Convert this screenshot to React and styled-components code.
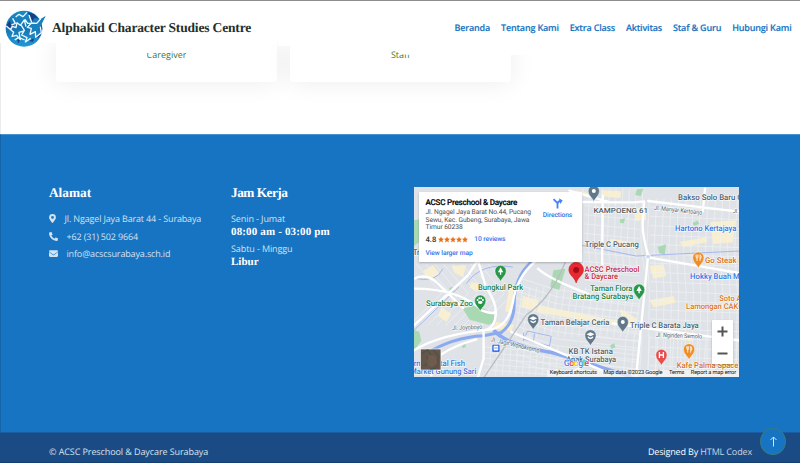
import React from "react";
import styled, { createGlobalStyle } from "styled-components";

const GlobalStyle = createGlobalStyle`
  *, *::before, *::after { box-sizing: border-box; }
  body {
    margin: 0;
    background: #fff;
    font-family: "Open Sans", "Noto Sans", sans-serif;
    text-rendering: geometricPrecision;
    overflow: hidden;
  }
`;

const serif = `"Liberation Serif", "Times New Roman", serif`;

const Page = styled.div`
  position: relative;
  width: 800px;
  height: 463px;
  display: flex;
  flex-direction: column;
  overflow: hidden;
  background: #fff;
`;

const Header = styled.header`
  height: 43px;
  flex: none;
  display: flex;
  align-items: center;
  justify-content: space-between;
  padding: 12px 8.5px 0 5px;
  background: #fff;
  border-top: 1px solid #8e8e8e;
  position: relative;
  z-index: 2;
`;

const Brand = styled.div`
  display: flex;
  align-items: center;
  gap: 6px;
`;

const Logo = styled.svg`
  width: 41px;
  height: 39px;
  flex: none;
`;

const BrandName = styled.h1`
  margin: 0;
  font: 700 13.5px/16px ${serif};
  letter-spacing: -0.17px;
  color: #24302a;
  white-space: nowrap;
`;

const Nav = styled.nav`
  display: flex;
  gap: 10.9px;
`;

const NavLink = styled.a`
  font-size: 9px;
  line-height: 14px;
  font-weight: 600;
  letter-spacing: -0.17px;
  -webkit-text-stroke: 0.15px #1774c2;
  color: #1774c2;
  white-space: nowrap;
`;

const Team = styled.section`
  height: 91px;
  flex: none;
  display: flex;
  gap: 13px;
  padding-left: 55px;
  border-left: 1px solid #ececec;
  overflow: hidden;
`;

const RoleCard = styled.div`
  width: 221px;
  height: 39px;
  flex: none;
  background: #fff;
  border-radius: 0 0 3px 3px;
  box-shadow: 0 0 26px rgba(0, 0, 0, 0.08);
  padding-top: 5px;
  text-align: center;
  line-height: 14px;
`;

const Role = styled.span`
  display: block;
  width: fit-content;
  margin: 0 auto;
  font-size: 9px;
  line-height: 14px;
  color: #3d7a37;
  clip-path: ${(p) => p.$clip};
`;

const HeaderShade = styled.div`
  position: absolute;
  z-index: 1;
  left: 278px;
  top: 43px;
  width: 522px;
  height: 12px;
  background: #fff;
  clip-path: polygon(0 0, 100% 0, 100% 100%, 232px 100%, 232px 3px, 0 3px);
`;

const Footer = styled.footer`
  height: 298px;
  flex: none;
  display: grid;
  grid-template-columns: 182px 183px 325px;
  padding: 52px 0 0 48px;
  background: #1774c2;
  color: #d3e1ef;
  border-top: 1px solid #4a94d2;
  border-left: 1px solid #1565ab;
`;

const Column = styled.div`
  display: flex;
  flex-direction: column;
`;

const Heading = styled.h2`
  margin: -2px 0 9px;
  font: 700 13.3px/16px ${serif};
  letter-spacing: ${(p) => p.$track || 0}px;
  color: #fff;
`;

const ContactRow = styled.div`
  display: flex;
  align-items: center;
  height: 17.5px;
  font-size: 9px;
  letter-spacing: -0.15px;
  gap: ${(p) => p.$gap || 8.5}px;
  white-space: nowrap;
  svg { width: ${(p) => p.$icon || 9}px; height: 9px; fill: #d6e2ee; flex: none; }
`;

const Days = styled.div`
  font-size: 9px;
  letter-spacing: -0.1px;
  line-height: 14px;
  margin-top: 2px;
`;

const Hours = styled.div`
  font: 700 11px/14px ${serif};
  color: #fff;
  letter-spacing: ${(p) => p.$track || 0}px;
  margin-top: -1px;
  margin-bottom: 1px;
  white-space: nowrap;
`;

const MapFrame = styled.div`
  position: relative;
  width: 325px;
  height: 190px;
  overflow: hidden;
  font-family: Roboto, sans-serif;
`;

const MapDrawing = styled.svg`
  display: block;
  width: 325px;
  height: 190px;
`;

const PlaceCard = styled.div`
  position: absolute;
  left: 5px;
  top: 5px;
  width: 163px;
  height: 70px;
  background: #fff;
  box-shadow: 0 1px 2px rgba(0, 0, 0, 0.25);
  display: flex;
  justify-content: space-between;
  padding: 5px 10px 0 6.5px;
`;

const PlaceInfo = styled.div`
  width: 114px;
  white-space: nowrap;
`;

const PlaceName = styled.div`
  font: 500 8.1px/10px Roboto, sans-serif;
  letter-spacing: -0.25px;
  -webkit-text-stroke: 0.15px #000;
  color: #000;
`;

const Address = styled.div`
  margin-top: 2px;
  font-size: 6.7px;
  letter-spacing: -0.07px;
  line-height: 7.7px;
  color: #4d4d4d;
`;

const Rating = styled.div`
  display: flex;
  align-items: center;
  margin-top: 3px;
  height: 9px;
  font-size: 7.6px;
  font-weight: 500;
  color: #333;
  svg { width: 30px; height: 7px; margin: 0 6px 0 2px; fill: #e7711b; }
`;

const Link = styled.a`
  font-size: 6.7px;
  font-weight: 500;
  letter-spacing: -0.09px;
  line-height: 9px;
  color: #3271e8;
`;

const LargerMap = styled(Link)`
  display: block;
  margin-top: 5px;
`;

const Directions = styled.div`
  display: flex;
  flex-direction: column;
  align-items: center;
  padding-top: 1px;
  width: 29px;
  svg { width: 11px; height: 11px; }
`;

const DirectionLink = styled(Link)`
  margin-top: 2px;
`;

const Zoom = styled.div`
  position: absolute;
  right: 6px;
  bottom: 13px;
  width: 21px;
  height: 44px;
  background: #fff;
  box-shadow: 0 1px 2px rgba(0, 0, 0, 0.25);
  display: grid;
  grid-template-rows: 1fr 1fr;
  place-items: center;
  svg { width: 11px; height: 11px; stroke: #555; stroke-width: 2; }
`;

const Attribution = styled.div`
  position: absolute;
  right: 0;
  bottom: 0;
  display: flex;
  gap: 6.5px;
  height: 7px;
  padding: 0 3px;
  font-size: 5.7px;
  letter-spacing: -0.13px;
  line-height: 7px;
  color: #111;
  background: rgba(245, 245, 245, 0.75);
  white-space: nowrap;
`;

const Copyright = styled.div`
  flex: 1;
  display: flex;
  align-items: center;
  justify-content: space-between;
  padding: 7px 48px 0 49px;
  background: #1b4b85;
  color: #d9e1ea;
  font-size: 9px;
  font-weight: 500;
  letter-spacing: -0.09px;
  border-top: 1px solid #1a5c9f;
  border-bottom: 1px solid #153f70;
`;

const Credit = styled.span`
  color: #fff;
  letter-spacing: -0.14px;
  a { color: #ccd6e1; }
`;

const BackToTop = styled.button`
  position: absolute;
  left: 760px;
  top: 428px;
  width: 26px;
  height: 27px;
  border-radius: 50%;
  border: 1px solid #357b83;
  background: #1774c2;
  display: grid;
  place-items: center;
  padding: 0;
  svg { width: 9px; height: 11px; stroke: #d4e5f3; fill: none; }
`;

const navItems = ["Beranda", "Tentang Kami", "Extra Class", "Aktivitas", "Staf & Guru", "Hubungi Kami"];

function BrandLogo() {
  return (
    <Logo viewBox="0 0 123 117">
      <defs>
        <linearGradient id="globe" x1="0" y1="0" x2="0" y2="1">
          <stop offset="0" stopColor="#168bc4" />
          <stop offset=".5" stopColor="#1676b4" />
          <stop offset="1" stopColor="#2099d3" />
        </linearGradient>
      </defs>
      <ellipse cx="57" cy="59" rx="55" ry="54" fill="url(#globe)" />
      <path d="M68 9l20 7 13 14-12-4-8 12zM104 40l8 18-5 20-9 10 3-28zM5 48l10-14 4 17-6 9zM37 91l8 2-6 11zM72 96l15-8-3 10z" fill="#1c3c8a" />
      <path d="M122 21l-15 9-12 13-16-1-12 13 12 3-4 18 16-8 1 17 17-14-3-18 10-20z" fill="#1781bd" />
      <g fill="none" stroke="#eef9ff" strokeWidth="4" strokeLinejoin="round">
        <path d="M107 30l-12 13-16-1-12 13 12 3-4 18 16-8 1 17 17-14-3-18" />
        <path d="M4 51l13 11 5-10 11 4 3-15 10 8 12-16 5 20M17 62l9 8-5 12 14-3 11 13-4-22 15-4M32 24l10-8 12 7 12-13M49 49l9 15-8 14 16 8-5 13 16-11M29 93l12-8 18 8M60 31l8 12 12 0M23 28l8 15-12 5M72 18l8 22" />
      </g>
      <path d="M122 21l-13 9-8 13 8-6 6-9z" fill="#1781bd" />
    </Logo>
  );
}

const stars = [0, 1, 2, 3, 4].map((i) => (
  <path key={i} transform={`translate(${i * 12},0)`} d="M6 0l1.8 4.2 4.2.3-3.2 3 1 4.5L6 9.5 2.2 12l1-4.5L0 4.5l4.2-.3z" />
));

function Pin({ x, y, color, children }) {
  return (
    <g transform={`translate(${x} ${y})`}>
      <path d="M0 32C-3 21-17 15-17 0A17 17 0 0 1 17 0C17 15 3 21 0 32Z" fill={color} stroke="#fff" strokeWidth="1.5" />
      {children}
    </g>
  );
}

const Label = styled.text`
  font-family: Roboto, sans-serif;
  font-size: ${(p) => p.$size || 24}px;
  font-weight: ${(p) => (p.$street ? 400 : 500)};
  fill: ${(p) => p.$color || "#4b626d"};
  stroke: #fff;
  stroke-width: 4px;
  stroke-opacity: 0.85;
  stroke-linejoin: round;
  paint-order: stroke;
`;

const green = "#218145";
const blue = "#3474e0";
const orange = "#d9731a";

const labels = [
  { t: "KAMPOENG 61", x: 542, y: 83, w: 164, c: "#555d63", s: 21 },
  { t: "Bakso Solo Baru G", x: 796, y: 45, w: 194 },
  { t: "Hartono Kertajaya", x: 787, y: 137, w: 184, c: blue },
  { t: "Triple C Pucang", x: 516, y: 184, w: 162 },
  { t: "Go Steak N", x: 877, y: 234, w: 117, c: orange },
  { t: "Hokky Buah Ma", x: 832, y: 281, w: 162, c: blue },
  { t: "ACSC Preschool", x: 515, y: 259, w: 165, c: "#c5293d" },
  { t: "& Daycare", x: 515, y: 281, w: 101, c: "#c5293d" },
  { t: "Taman Flora", x: 532, y: 318, w: 127, c: green },
  { t: "Bratang Surabaya", x: 479, y: 342, w: 182, c: green },
  { t: "Bungkul Park", x: 195, y: 313, w: 136, c: green },
  { t: "Surabaya Zoo", x: 39, y: 362, w: 141, c: green },
  { t: "Soto A", x: 920, y: 346, w: 66, c: orange },
  { t: "Lamongan CAK I", x: 820, y: 370, w: 169, c: orange },
  { t: "Taman Belajar Ceria", x: 383, y: 419, w: 207 },
  { t: "Triple C Barata Jaya", x: 652, y: 427, w: 206 },
  { t: "KB TK Istana", x: 467, y: 505, w: 133 },
  { t: "Anak Surabaya", x: 460, y: 529, w: 150 },
  { t: "Kafe Palma Space", x: 792, y: 547, w: 185, c: orange },
  { t: "Ornamental Fish", x: -14, y: 543, w: 170, c: blue },
  { t: "Market Gunung Sari", x: -8, y: 567, w: 198, c: blue },
  { t: "Tr", x: 0, y: 210, w: 20 },
];

const range = (a, b, step) => Array.from({ length: Math.ceil((b - a) / step) }, (_, i) => a + i * step);

function CityMap() {
  return (
    <MapDrawing viewBox="3 5 976 570" preserveAspectRatio="none">
      <rect x="0" y="0" width="985" height="580" fill="#dfe2e7" />
      <g fill="#f8efd0">
        <path d="M30 258l30-18 20 25-30 20zM115 242l45-2-10 35-26-13zM175 290l22 5-2 24-25-12zM290 300l24 5-15 78-22-5zM330 332l48 11-10 34-43-12zM375 360l260 50-3 15-260-44zM85 365l30 20-14 24-26-17zM710 242l42-5 9 35-39 8zM665 70l30-5 6 38-34 4zM592 160l82 12-3 14-80-10zM800 170l80-14 4 14-70 15zM893 110l76-5-8 66-60 5zM710 345l72-13 6 20-65 14zM623 370l50 30-4 28-42-12zM732 440l110 15-3 13-108-13zM490 15l55 12-2 11-56-12zM250 410l53 8-8 20-55-10zM565 15l60 3-2 20-58-5z" />
      </g>
      <g fill="none" stroke="#eff1f3" strokeWidth="2.2">
        {range(510, 710, 20).map((x) => <path key={`a${x}`} d={`M${x} 10l-6 160 10 85`} />)}
        {range(710, 980, 22).map((x) => <path key={`b${x}`} d={`M${x} 40l-8 150 8 130-4 240`} />)}
        {range(60, 570, 28).map((y) => <path key={`c${y}`} d={`M515 ${y}l165 16M712 ${y + 5}l270 10`} />)}
        {range(275, 540, 21).map((y) => <path key={`d${y}`} d={`M310 ${y}l120 38 250 29`} />)}
        {range(330, 690, 21).map((x) => <path key={`e${x}`} d={`M${x} 305l-22 150`} />)}
        {range(10, 240, 27).map((x) => <path key={`f${x}`} d={`M${x} 235l75 90-95 95`} />)}
        {range(235, 450, 20).map((x) => <path key={`g${x}`} d={`M${x} 480l-7 90`} />)}
        {range(485, 570, 17).map((y) => <path key={`h${y}`} d={`M215 ${y}l235 18`} />)}
        {range(640, 980, 24).map((x) => <path key={`i${x}`} d={`M${x} 450l-8 120`} />)}
      </g>
      <g fill="#a9d9b2">
        <path d="M150 370l39-12 54 28 2 25-18 7-57-15zM3 105l16-3v68l-16 12zM422 255l36-5-19 64-27-8zM3 434l16 5 6 28-22 28zM672 12l20-2-8 22-17-3zM735 185l25-8-4 31-16-4zM148 475l10-3v14l-10 2zM109 308l10-4 3 13-11 3zM622 102l15-3-4 15-11-1zM840 112l15-6 5 10-17 5zM592 480l12-6 4 12-12 5z" />
      </g>
      <g fill="none" stroke="#a5b7ef" strokeWidth="3">
        <path d="M0 278Q70 295 90 250M160 295Q205 230 300 245M3 435L138 305M508 180l162 32 310-15M345 437l70 16-5 29-79-21zM332 442v25M365 445l-4 28" />
      </g>
      <g fill="none" strokeLinecap="round" strokeLinejoin="round">
        <path d="M35 507Q120 455 211 451Q245 444 264 442Q305 413 304 352Q305 275 354 231" stroke="#8baaf0" strokeWidth="9" />
        <path d="M245 437Q282 480 420 502Q530 533 570 548L650 572" stroke="#8baaf0" strokeWidth="11" />
        <g stroke="#fff" strokeWidth="7">
          <path d="M3 420L165 270 190 232M196 230Q213 285 220 308Q249 348 249 381Q247 431 212 435L212 520 195 575M3 310Q140 310 208 376Q244 389 247 378M3 495Q83 445 238 432 286 421 300 351Q310 278 365 230M375 250Q410 282 525 325M510 50l155 1L694 48 691 100Q685 137 706 210L670 575M706 216L980 263M570 32l-2 205M706 47l170 20 105 12M600 414Q720 432 980 465M3 280Q38 263 70 290L150 368M295 440l280 118M55 570Q40 505 190 462M470 16l115 33M877 10l-7 70M450 575l95-52" />
        </g>
        <path d="M465 210Q421 335 340 389L214 575" stroke="#b9bec3" strokeWidth="4" />
      </g>
      <circle cx="706" cy="214" r="7" fill="#c7d5f5" stroke="#fff" strokeWidth="3" />

      <Label $street $size={19} transform="translate(724 73) rotate(6)" textLength="145" lengthAdjust="spacingAndGlyphs">Jl. Manyar Kertoarjo</Label>
      <Label $street $size={19} transform="translate(730 455) rotate(2)" textLength="138" lengthAdjust="spacingAndGlyphs">Jl. Nginden Semolo</Label>
      <Label $street $size={19} transform="translate(118 434) rotate(-2)" textLength="90" lengthAdjust="spacingAndGlyphs">Jl. Joyoboyo</Label>
      <Label $street $size={19} transform="translate(232 468) rotate(13)" textLength="150" lengthAdjust="spacingAndGlyphs">Jl. Jagir Wonokromo</Label>
      <Label $street $size={17} x="960" y="83">Jl.</Label>
      {labels.map((l) => (
        <Label key={l.t} x={l.x} y={l.y} $color={l.c} $size={l.s} textLength={l.w} lengthAdjust="spacingAndGlyphs">{l.t}</Label>
      ))}

      <Pin x="543" y="17" color="#60788a"><circle r="6" fill="#fff" /></Pin>
      <Pin x="263" y="257" color="#28974a"><path d="M0-11l8 15h-6v7h-4V4h-6z" fill="#fff" /></Pin>
      <Pin x="202" y="346" color="#28974a">
        <g fill="#fff"><ellipse cy="5" rx="7" ry="5" /><circle cx="-8" cy="-2" r="3" /><circle cx="-3" cy="-7" r="3" /><circle cx="3" cy="-7" r="3" /><circle cx="8" cy="-2" r="3" /></g>
      </Pin>
      <Pin x="679" y="313" color="#28974a"><path d="M0-11l8 15h-6v7h-4V4h-6z" fill="#fff" /></Pin>
      <Pin x="361" y="402" color="#60788a"><path d="M-12-3L0-9 12-3 0 3zM-8 3l8 4 8-4v5l-8 4-8-4z" fill="#fff" /></Pin>
      <Pin x="533" y="450" color="#60788a"><path d="M-12-3L0-9 12-3 0 3zM-8 3l8 4 8-4v5l-8 4-8-4z" fill="#fff" /></Pin>
      <Pin x="630" y="410" color="#60788a"><circle r="6" fill="#fff" /></Pin>
      {[{ x: 857, y: 217 }, { x: 829, y: 492 }].map((p) => (
        <Pin key={p.x} x={p.x} y={p.y} color="#f08d24"><path d="M-7-9v6q0 4 3 4v9M-4-9v9M-1-9v6q0 4-3 4M5 10V-9q5 4 3 11H5" fill="none" stroke="#fff" strokeWidth="2.5" /></Pin>
      ))}
      <Pin x="746" y="509" color="#e94c4b"><path d="M-6-9V9M6-9V9M-6 0H6" fill="none" stroke="#fff" strokeWidth="4" /></Pin>
      <path d="M490 293C485 274 468 270 468 253A22 22 0 0 1 512 253C512 270 495 274 490 293Z" fill="#e92931" stroke="#c61b25" strokeWidth="1.5" />
      <circle cx="490" cy="254" r="9" fill="#a20d19" />

      <rect x="238" y="478" width="22" height="22" rx="3" fill="#326cea" />
      <path d="M243 482h12v12h-12zM244 498l3-4m7 4l-3-4" fill="#fff" stroke="#fff" strokeWidth="1.5" />
      <path d="M244 488h10" stroke="#326cea" strokeWidth="2" />

      <rect x="22" y="491" width="62" height="63" fill="#66554b" stroke="#fff" strokeWidth="2" />
      <path d="M26 505l18-11 8 13-10 10 8 15-18 9M61 494l16 19-5 35-20 3" fill="none" stroke="#4d5547" strokeWidth="4" />
      <path d="M46 508l22 5 5 19-17 14-14-9z" fill="#755e50" opacity=".7" />
      <text x="453" y="541" fontFamily="Roboto, sans-serif" fontSize="27" fontWeight="500" textLength="76" stroke="#fff" strokeWidth="3" paintOrder="stroke">
        <tspan fill="#4285f4">G</tspan><tspan fill="#ea4335">o</tspan><tspan fill="#fbbc05">o</tspan><tspan fill="#4285f4">g</tspan><tspan fill="#34a853">l</tspan><tspan fill="#ea4335">e</tspan>
      </text>
    </MapDrawing>
  );
}

export default function App() {
  return (
    <Page>
      <GlobalStyle />
      <Header>
        <Brand>
          <BrandLogo />
          <BrandName>Alphakid Character Studies Centre</BrandName>
        </Brand>
        <Nav>{navItems.map((item) => <NavLink key={item}>{item}</NavLink>)}</Nav>
      </Header>
      <HeaderShade />
      <Team>
        <RoleCard><Role $clip="polygon(0 5px, 13% 5px, 13% 0, 100% 0, 100% 100%, 0 100%)">Caregiver</Role></RoleCard>
        <RoleCard><Role $clip="polygon(0 0, 47% 0, 47% 6px, 100% 7px, 100% 100%, 0 100%)">Staff</Role></RoleCard>
      </Team>
      <Footer>
        <Column>
          <Heading>Alamat</Heading>
          <ContactRow $icon={7}>
            <svg viewBox="0 0 384 512"><path fillRule="evenodd" d="M172 501C27 291 0 270 0 192a192 192 0 0 1 384 0c0 78-27 99-172 309a24 24 0 0 1-40 0zM192 272a80 80 0 1 0 0-160 80 80 0 0 0 0 160z" /></svg>
            Jl. Ngagel Jaya Barat 44 - Surabaya
          </ContactRow>
          <ContactRow>
            <svg viewBox="0 0 512 512"><path d="M498 361l-112-48a24 24 0 0 0-28 7l-50 61A371 371 0 0 1 131 204l61-50a24 24 0 0 0 7-28L151 14A24 24 0 0 0 123 1L19 25A24 24 0 0 0 0 48c0 257 208 464 464 464a24 24 0 0 0 23-19l24-104a24 24 0 0 0-13-28z" /></svg>
            +62 (31) 502 9664
          </ContactRow>
          <ContactRow>
            <svg viewBox="0 0 512 512"><path d="M48 64a48 48 0 0 0-29 86l218 164a32 32 0 0 0 38 0l218-164a48 48 0 0 0-29-86zM0 176v208a64 64 0 0 0 64 64h384a64 64 0 0 0 64-64V176L294 339a64 64 0 0 1-76 0z" /></svg>
            info@acscsurabaya.sch.id
          </ContactRow>
        </Column>
        <Column>
          <Heading $track={-0.5}>Jam Kerja</Heading>
          <Days>Senin - Jumat</Days>
          <Hours $track={0.15}>08:00 am - 03:00 pm</Hours>
          <Days>Sabtu - Minggu</Days>
          <Hours>Libur</Hours>
        </Column>
        <MapFrame>
          <CityMap />
          <PlaceCard>
            <PlaceInfo>
              <PlaceName>ACSC Preschool &amp; Daycare</PlaceName>
              <Address>Jl. Ngagel Jaya Barat No.44, Pucang<br />Sewu, Kec. Gubeng, Surabaya, Jawa<br />Timur 60238</Address>
              <Rating>4.8<svg viewBox="0 0 60 12">{stars}</svg><Link>10 reviews</Link></Rating>
              <LargerMap>View larger map</LargerMap>
            </PlaceInfo>
            <Directions>
              <svg viewBox="0 0 36 36"><path d="M18 34V17L5 4M18 20Q18 11 30 9" fill="none" stroke="#4284f3" strokeWidth="6" /><path d="M23 1l12 7-8 12z" fill="#4284f3" /></svg>
              <DirectionLink>Directions</DirectionLink>
            </Directions>
          </PlaceCard>
          <Zoom>
            <svg viewBox="0 0 11 11"><path d="M.5 5.5h10M5.5.5v10" /></svg>
            <svg viewBox="0 0 11 11"><path d="M.5 5.5h10" /></svg>
          </Zoom>
          <Attribution>
            <span>Keyboard shortcuts</span><span>Map data ©2023 Google</span><span>Terms</span><span>Report a map error</span>
          </Attribution>
        </MapFrame>
      </Footer>
      <Copyright>
        <span>© ACSC Preschool &amp; Daycare Surabaya</span>
        <Credit>Designed By <a>HTML Codex</a></Credit>
      </Copyright>
      <BackToTop aria-label="Back to top">
        <svg viewBox="0 0 9 11"><path d="M4.5 10.5V1M1.5 4l3-3 3 3" /></svg>
      </BackToTop>
    </Page>
  );
}
